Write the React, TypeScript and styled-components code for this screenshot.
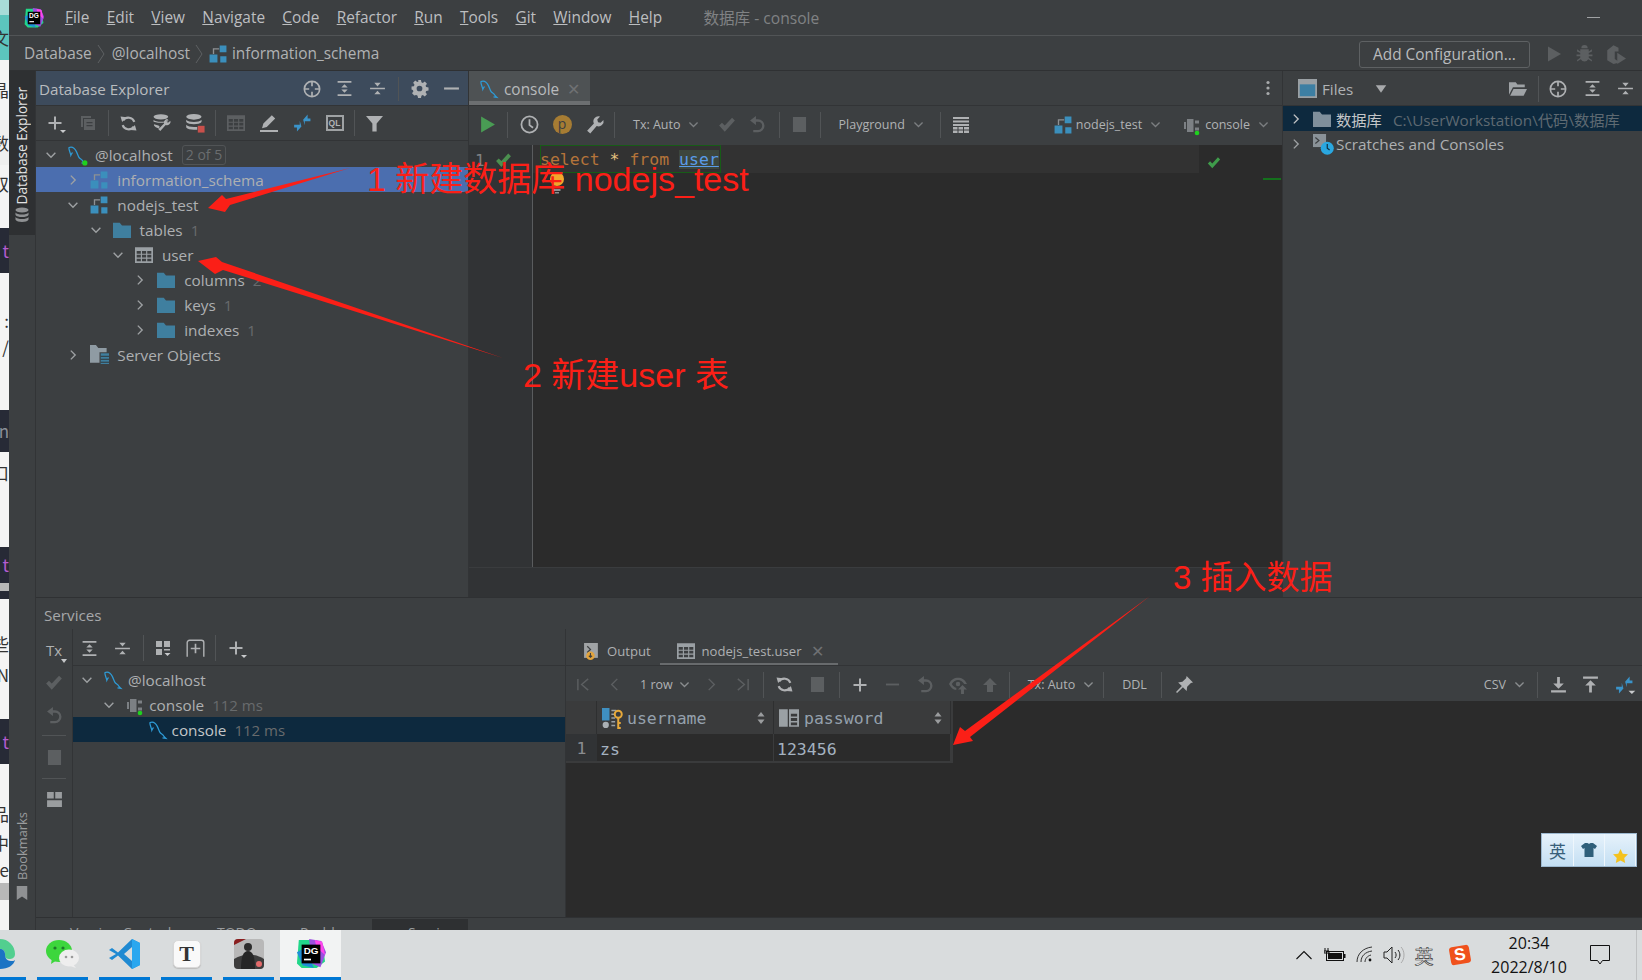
import React from "react";
import styled, { createGlobalStyle } from "styled-components";

const Global = createGlobalStyle`
  html, body { margin: 0; padding: 0; width: 1642px; height: 980px; overflow: hidden; background: #3c3f41; }
  #root { width: 1642px; height: 980px; }
  * { box-sizing: border-box; }
`;

const UI = `"Open Sans", "Noto Sans CJK SC", sans-serif`;
const MONO = `"DejaVu Sans Mono", "Liberation Mono", monospace`;

const Page = styled.div`
  position: relative; width: 1642px; height: 980px; display: flex; flex-direction: column;
  font-family: ${UI}; font-size: 15px; color: #b4b6b8; overflow: hidden;
`;
const Frame = styled.div`display: flex; height: 930px;`;
const Backdrop = styled.div`width: 9px; flex: none; display: flex; flex-direction: column; background: #f4f4f4; overflow: hidden;`;
const Band = styled.div<{ $h: number; $bg: string; $fg?: string }>`
  height: ${p => p.$h}px; background: ${p => p.$bg}; color: ${p => p.$fg || "#333"}; font-size: 17px; line-height: ${p => p.$h}px;
  font-family: "Noto Sans CJK SC", sans-serif; white-space: nowrap; overflow: hidden; flex: none; display: flex; justify-content: flex-end;
`;
const Ide = styled.div`flex: 1; display: flex; flex-direction: column; min-width: 0; background: #3c3f41;`;
const TitleBar = styled.div`height: 36px; flex: none; display: flex; align-items: center; padding-left: 15px; border-bottom: 1px solid #515456;`;
const LogoSlot = styled.div`width: 20px; height: 20px; margin-right: 21px;`;
const Menu = styled.span`margin-right: 17.3px; color: #bcbec0; font-size: 15.4px;`;
const WinTitle = styled.span`margin-left: 24px; color: #808284; font-size: 15.6px;`;
const Minimize = styled.div`margin-left: auto; margin-right: 42px; width: 13px; height: 1px; background: #a0a2a4;`;
const NavBar = styled.div`height: 35px; flex: none; display: flex; align-items: center; padding: 1px 0 0 15px; border-bottom: 1px solid #2f3133; font-size: 15.4px;`;
const Crumb = styled.span`display: flex; align-items: center; gap: 5px; color: #b0b2b4;`;
const CrumbSep = styled.svg<{ $mr: number }>`width: 8px; height: 24px; margin: 0 ${p => p.$mr}px 0 5px;`;
const AddConfig = styled.div`
  margin: 2px 0 0 auto; width: 171px; height: 27px; border: 1px solid #5e6163; border-radius: 3px; display: flex; align-items: center; justify-content: center;
  color: #b9bbbd; font-size: 15.4px;
`;
const NavIcons = styled.div`display: flex; align-items: center; margin: 0 11px 0 8px;`;
const Body = styled.div`flex: 1; display: flex; min-height: 0;`;
const ToolStrip = styled.div`width: 27px; flex: none; display: flex; flex-direction: column; border-right: 1px solid #323436;`;
const StripActive = styled.div`height: 164px; background: #2e3032; display: flex; flex-direction: column; align-items: center; padding-top: 16px; gap: 3px;`;
const StripBottom = styled.div`margin-top: auto; display: flex; flex-direction: column; align-items: center; padding-bottom: 30px; gap: 6px;`;
const VerticalText = styled.div<{ $active?: boolean }>`
  writing-mode: vertical-rl; transform: rotate(180deg); font-size: ${p => (p.$active ? 13.7 : 12.9)}px; line-height: 16px; color: ${p => (p.$active ? "#e3e3e3" : "#9a9c9e")};
`;
const Workspace = styled.div`flex: 1; display: flex; flex-direction: column; min-width: 0;`;
const Upper = styled.div`height: 527px; flex: none; display: flex; border-bottom: 1px solid #2f3133;`;
const DbPanel = styled.div`width: 433px; flex: none; display: flex; flex-direction: column; border-right: 1px solid #323436;`;
const DbHeader = styled.div`
  height: 35px; flex: none; display: flex; align-items: center; background: #3d4b5c; padding: 1px 0 0 3px; border-bottom: 1px solid #323436; font-size: 15.2px; color: #b9bcbf;
`;
const HeaderIcons = styled.div`margin-left: auto; display: flex; align-items: center;`;
const Btn = styled.div<{ $w?: number; $h?: number }>`width: ${p => p.$w || 33}px; height: ${p => p.$h || 26}px; flex: none; display: flex; align-items: center; justify-content: center;`;
const Gap = styled.div<{ $w: number }>`width: ${p => p.$w}px; flex: none;`;
const Sep = styled.div<{ $m?: number; $h?: number }>`width: 1px; height: ${p => p.$h || 26}px; background: #515456; flex: none; margin: 0 ${p => p.$m ?? 3.5}px;`;
const DbToolbar = styled.div`height: 35px; flex: none; display: flex; align-items: center; padding-left: 2px; border-bottom: 1px solid #323436;`;
const Tree = styled.div<{ $top?: number }>`display: flex; flex-direction: column; padding-top: ${p => p.$top ?? 1}px;`;
const Row = styled.div<{ $level: number; $bg?: string; $base?: number }>`
  height: 25px; flex: none; display: flex; align-items: center; padding-left: ${p => (p.$base ?? 7) + p.$level * 22.3}px; background: ${p => p.$bg || "transparent"}; white-space: nowrap;
  font-size: 15.3px; color: #aeb0b2;
`;
const ChevSlot = styled.div`width: 16px; height: 16px; margin-right: 8px; flex: none; display: flex; align-items: center; justify-content: center;`;
const IconSlot = styled.div<{ $mr?: number }>`width: 20px; height: 20px; margin-right: ${p => p.$mr ?? 8}px; flex: none; display: flex; align-items: center; justify-content: center;`;
const Count = styled.span`color: #686b6d; margin-left: 8px; font-size: 15px;`;
const Badge = styled.span`border: 1px solid #515456; border-radius: 3px; color: #6a6d6f; font-size: 14px; height: 20px; line-height: 18px; padding: 0 3px; margin-left: 9px;`;
const EditorPane = styled.div`width: 814px; flex: none; display: flex; flex-direction: column; border-right: 1px solid #323436;`;
const TabStrip = styled.div`height: 35px; flex: none; display: flex; align-items: stretch; border-bottom: 1px solid #323436;`;
const EdTab = styled.div`
  width: 121px; background: #4e5254; border-bottom: 4px solid #6c6f71; display: flex; align-items: center; padding: 6px 0 0 11px; gap: 6px; color: #b8babc; font-size: 15.4px;
`;
const Kebab = styled.div`margin-left: auto; width: 29px; display: flex; align-items: center; justify-content: center;`;
const EdToolbar = styled.div`height: 39px; flex: none; display: flex; align-items: center; padding: 0 0 2px 1px; color: #b0b2b4;`;
const Label = styled.span<{ $ml?: number; $mr?: number; $c?: string; $fs?: number }>`
  margin-left: ${p => p.$ml ?? 0}px; margin-right: ${p => p.$mr ?? 0}px; color: ${p => p.$c || "#b0b2b4"}; font-size: ${p => p.$fs || 12.5}px; white-space: nowrap;
`;
const PushRight = styled.div`margin-left: auto; display: flex; align-items: center;`;
const EditorBody = styled.div`position: relative; flex: 1; display: flex; background: #2b2b2b; min-height: 0;`;
const Gutter = styled.div`
  width: 64px; flex: none; background: #313335; border-right: 1px solid #5a5c5e; padding: 2px 0 0 6px; height: 100%;
  font-family: ${MONO}; font-size: 16px; color: #7f8183; line-height: 27px;
`;
const GutterLine = styled.div`display: flex; gap: 10px; align-items: center; height: 27px;`;
const CodeColumn = styled.div`flex: 1; display: flex; flex-direction: column;`;
const CurrentLine = styled.div`height: 28px; margin-right: 83px; background: #323232; padding-left: 7px; display: flex;`;
const Statement = styled.div`
  width: 181px; height: 28px; border: 1px solid #175c17; font-family: ${MONO}; font-size: 16.5px; line-height: 28px; letter-spacing: 0; white-space: pre; background: #323232;
  text-indent: -1px;
`;
const Kw = styled.span`color: #b5743a;`;
const Star = styled.span`color: #e6c27f;`;
const TableRef = styled.span`color: #5a9be8; text-decoration: underline; background: #3d463d;`;
const Bulb = styled.div`position: absolute; left: 80px; top: 27px;`;
const OkMark = styled.div`position: absolute; right: 61px; top: 11px;`;
const StripeMark = styled.div`position: absolute; right: 1px; top: 33px; width: 18px; height: 2px; background: #14701c;`;
const ProblemsStrip = styled.div`height: 30px; flex: none; background: #313335; border-top: 1px solid #3a3c3e;`;
const FilesPane = styled.div`flex: 1; display: flex; flex-direction: column; min-width: 0;`;
const FilesHeader = styled.div`height: 35px; flex: none; display: flex; align-items: center; padding: 1px 0 0 15px; border-bottom: 1px solid #323436; color: #b0b2b4; font-size: 15.2px; gap: 5px;`;
const Muted = styled.span`color: #5f6a72; margin-left: 11px; font-size: 15.3px;`;
const Services = styled.div`flex: 1; display: flex; flex-direction: column; min-height: 0;`;
const ServicesTitle = styled.div`height: 31px; flex: none; padding: 7px 0 0 8px; font-size: 15.2px; color: #a6a8aa;`;
const ServicesBody = styled.div`flex: 1; display: flex; min-height: 0;`;
const ServiceLeft = styled.div`width: 530px; flex: none; display: flex; border-right: 1px solid #323436;`;
const SideBar = styled.div`width: 37px; flex: none; display: flex; flex-direction: column; align-items: center; border-right: 1px solid #323436; padding-top: 4px;`;
const SideSep = styled.div`width: 24px; height: 1px; background: #515456; margin: 3px 0;`;
const TxLabel = styled.div`position: relative; font-size: 15px; width: 26px; height: 26px; line-height: 26px; text-align: center; color: #afb1b3;`;
const TinyDrop = styled.i`position: absolute; right: 0; bottom: 0; width: 0; height: 0; border: 3px solid transparent; border-top: 4px solid #c4c6c8; border-bottom: 0;`;
const ServiceMain = styled.div`flex: 1; display: flex; flex-direction: column; min-width: 0;`;
const SvcToolbar = styled.div`height: 37px; flex: none; display: flex; align-items: center; border-bottom: 1px solid #323436; padding: 2px 0 0 0;`;
const ResultPane = styled.div`flex: 1; display: flex; flex-direction: column; min-width: 0; margin-top: 0;`;
const ResTabs = styled.div`height: 37px; flex: none; padding: 10px 0 0 17px; display: flex; align-items: stretch; border-bottom: 1px solid #323436; font-size: 13.1px;`;
const ResTab = styled.div<{ $active?: boolean }>`
  display: flex; align-items: center; gap: 7px; padding: 0 ${p => (p.$active ? 14 : 9)}px 0 ${p => (p.$active ? 17 : 0)}px; color: #aeb0b2; height: 26px;
  border-bottom: 2px solid ${p => (p.$active ? "#686b6d" : "transparent")};
`;
const Close = styled.span`color: #6f7173; font-size: 16px; margin-left: 2px; line-height: 1;`;
const ResToolbar = styled.div`height: 35px; flex: none; display: flex; align-items: center; padding: 2px 0 0 2px;`;
const GridArea = styled.div`flex: 1; background: #2b2b2b; min-height: 0;`;
const GridWrap = styled.div`width: 387px; display: grid; grid-template-columns: 31px 177px 177px; grid-auto-rows: auto; font-family: ${MONO}; font-size: 16.5px; border-right: 2px solid #3a3b3c; border-bottom: 2px solid #3a3b3c;`;
const HeadCell = styled.div`height: 33px; background: #3a3b3c; border-right: 1px solid #2e2f30; display: flex; align-items: center; padding: 1px 8px 0 5px; gap: 5px; color: #95a1ad;`;
const NumCell = styled.div`height: 27px; background: #313335; display: flex; align-items: center; justify-content: center; padding-top: 2px; color: #8a8d90;`;
const Cell = styled.div`height: 27px; border-right: 1px solid #3a3b3c; display: flex; align-items: center; padding: 3px 0 0 3px; color: #a4b2c0; background: #2b2b2b;`;
const Sorter = styled.svg`width: 8px; height: 14px; margin-left: auto; flex: none;`;
const ColName = styled.span`letter-spacing: 0;`;
const StatusBar = styled.div`height: 13px; flex: none; border-top: 1px solid #2f3133; display: flex; padding-left: 14px; overflow: hidden; font-size: 14px; color: #9a9c9e;`;
const StatusItem = styled.div<{ $w: number; $pad: number; $active?: boolean }>`
  width: ${p => p.$w}px; padding: 5px 0 0 ${p => p.$pad}px; background: ${p => (p.$active ? "#2e3032" : "transparent")}; line-height: 18px; white-space: nowrap; margin-top: 1px;
`;
const Taskbar = styled.div`height: 50px; flex: none; background: #d9dcdd; display: flex; align-items: stretch;`;
const TaskBtn = styled.div<{ $w: number; $ml: number; $active?: boolean; $align?: string }>`
  width: ${p => p.$w}px; margin-left: ${p => p.$ml}px; flex: none; border-bottom: 3px solid #0078d4; display: flex; align-items: center; justify-content: ${p => p.$align || "center"};
  background: ${p => (p.$active ? "#f2f3f3" : "transparent")}; overflow: hidden;
`;
const TypTile = styled.div`
  width: 28px; height: 28px; border-radius: 5px; background: #f9f9f9; border: 1px solid #d8d8d8; box-shadow: 0 1px 1px #bbb; display: flex; align-items: center; justify-content: center;
  font-family: "Liberation Serif", serif; font-weight: 700; font-size: 22px; color: #333;
`;
const Tray = styled.div`margin-left: auto; display: flex; align-items: center; color: #111;`;
const TraySlot = styled.div<{ $w: number }>`width: ${p => p.$w}px; flex: none; display: flex; align-items: center; justify-content: center;`;
const ImeChar = styled.span`font-family: "Noto Sans CJK SC", sans-serif; font-size: 19px; color: #e9e9e9; -webkit-text-stroke: 0.6px #333; line-height: 1;`;
const Clock = styled.div`width: 92px; flex: none; display: flex; flex-direction: column; align-items: center; font-size: 16px; line-height: 24px; color: #111; font-family: "Open Sans", sans-serif;`;
const NoticeEdge = styled.div`width: 1px; height: 50px; background: #bfc1c2; margin: 0 5px 0 11px;`;
const Annotation = styled.div<{ $x: number; $y: number; $fs?: number }>`
  position: absolute; left: ${p => p.$x}px; top: ${p => p.$y}px; color: #fb1f17; font-size: ${p => p.$fs || 34}px; line-height: 44px; white-space: nowrap;
  font-family: "Liberation Sans", "Noto Sans CJK SC", sans-serif; font-weight: 400;
`;
const ArrowLayer = styled.svg`position: absolute; left: 0; top: 0; width: 1642px; height: 980px; pointer-events: none;`;
const Sogou = styled.div`
  position: absolute; left: 1541px; top: 833px; width: 96px; height: 34px; display: flex; border: 1px solid #9db9d0;
  background: linear-gradient(180deg, #e6f2fb, #c4dff3);
`;
const SogouCell = styled.div<{ $w: number; $star?: boolean }>`
  width: ${p => p.$w}px; flex: none; display: flex; align-items: ${p => (p.$star ? "flex-end" : "center")}; justify-content: center; padding-bottom: ${p => (p.$star ? 3 : 0)}px;
  border-right: 1px solid #eef6fc; font-family: "Noto Sans CJK SC", sans-serif; font-size: 17px; color: #39607a;
`;

const Glyph = styled.svg.attrs({ viewBox: "0 0 16 16" })<{ $s?: number; $c?: string }>`
  width: ${p => p.$s || 16}px; height: ${p => p.$s || 16}px; color: ${p => p.$c || "#afb1b3"}; flex: none; display: block; overflow: visible;
`;
type IP = { s?: number; c?: string };
const DIM = "#5c5f61";

const ChevD = ({ c = "#9ea1a3", s = 14 }: IP) => <Glyph $s={s} $c={c}><path d="M3 5.5l5 5 5-5" fill="none" stroke="currentColor" strokeWidth="1.6" /></Glyph>;
const ChevR = ({ c = "#9ea1a3", s = 14 }: IP) => <Glyph $s={s} $c={c}><path d="M5.5 3l5 5-5 5" fill="none" stroke="currentColor" strokeWidth="1.6" /></Glyph>;
const Target = ({ s = 18, c }: IP) => (
  <Glyph $s={s} $c={c}><g fill="none" stroke="currentColor" strokeWidth="1.5"><circle cx="8" cy="8" r="6.8" /><path d="M8 1.5v4M8 10.5v4M1.5 8h4M10.5 8h4" /></g></Glyph>
);
const ExpandAll = ({ s = 17, c }: IP) => (
  <Glyph $s={s} $c={c}><path d="M1.5 1h13v1.6h-13zM1.5 13.4h13V15h-13zM8 4l3 3H5zM8 12l-3-3h6z" fill="currentColor" /></Glyph>
);
const CollapseAll = ({ s = 17, c }: IP) => (
  <Glyph $s={s} $c={c}><path d="M1 7.2h14v1.6H1zM8 6L5 2.5h6zM8 10l3 3.5H5z" fill="currentColor" /></Glyph>
);
const Gear = ({ s = 17, c }: IP) => (
  <Glyph $s={s} $c={c}><path fillRule="evenodd" fill="currentColor" d="M6.6 0h2.8l.4 2.2 1.3.6L13 1.5l2 2-1.3 1.9.6 1.3 2.2.4v2.8l-2.2.4-.6 1.3 1.3 1.9-2 2-1.9-1.3-1.3.6-.4 2.2H6.6l-.4-2.2-1.3-.6L3 14.5l-2-2 1.3-1.9-.6-1.3L.5 9V6.2l2.2-.4.6-1.3L2 2.5l2-2 1.9 1.3 1.3-.6zM8 5.3a2.7 2.7 0 100 5.4 2.7 2.7 0 000-5.4z" /></Glyph>
);
const Dash = ({ s = 17, c }: IP) => <Glyph $s={s} $c={c}><path d="M1 7h14v2H1z" fill="currentColor" /></Glyph>;
const PlusDrop = ({ s = 16, c }: IP) => (
  <Glyph $s={s} $c={c}><path d="M7 1.5h2V7h5.5v2H9v5.500H7V9H1.500V7H7z" fill="currentColor" /><path d="M13 15h6l-3 3z" fill="#c8cacc" /></Glyph>
);
const Plus = ({ s = 16, c }: IP) => <Glyph $s={s} $c={c}><path d="M7 1.500h2V7h5.500v2H9v5.500H7V9H1.500V7H7z" fill="currentColor" /></Glyph>;
const CopyDoc = ({ s = 16, c = DIM }: IP) => (
  <Glyph $s={s} $c={c}><path d="M1 1h10v2H3v9H1z" fill="currentColor" /><path fillRule="evenodd" d="M4 4h11v11H4zM6.500 7v1.300h6V7zm0 3v1.300h6V10z" fill="currentColor" /></Glyph>
);
const Refresh = ({ s = 17, c }: IP) => (
  <Glyph $s={s} $c={c}><g fill="none" stroke="currentColor" strokeWidth="2"><path d="M13.500 6.500A6 6 0 003 5" /><path d="M2.500 9.500A6 6 0 0013 11" /></g><path d="M0.500 1.500l5.500.5-4 4.500zM15.500 14.500L10 14l4-4.500z" fill="currentColor" /></Glyph>
);
const DbStack = ({ s = 16, c }: IP) => (
  <Glyph $s={s} $c={c}><g fill="currentColor"><ellipse cx="8" cy="3" rx="6.500" ry="2.500" /><path d="M1.500 5.500c1 1.500 3.500 2 6.500 2s5.500-.5 6.500-2v2.500c-1 1.500-3.500 2-6.500 2s-5.500-.5-6.500-2z" /><path d="M1.500 10c1 1.500 3.500 2 6.500 2s5.500-.5 6.500-2v2.800c-1 1.500-3.500 2.200-6.500 2.200s-5.500-.7-6.500-2.200z" /></g></Glyph>
);
const DbWrench = ({ s = 18, c }: IP) => (
  <Glyph $s={s} $c={c}><g fill="currentColor"><ellipse cx="7" cy="2.500" rx="6.500" ry="2.300" /><path d="M.5 5c1 1.300 3.500 1.800 6.500 1.800S12.500 6.300 13.500 5v1.500L9 7.800H4.500L.5 6.800zM.8 9l4 1.200 1 .6L5.500 13 2.500 11.800 1 10.500z" /><path d="M15.500 6a3.200 3.200 0 01-4.200 3.800L6.500 15.200 4.800 13.500l5-5A3.200 3.200 0 0113.500 4.500L11.800 6.500l1.500 1.300z" /></g></Glyph>
);
const DbRed = ({ s = 18, c }: IP) => (
  <Glyph $s={s} $c={c}><g fill="currentColor"><ellipse cx="7" cy="2.500" rx="6.800" ry="2.500" /><path d="M.2 5c1 1.400 3.800 2 6.800 2s5.800-.6 6.800-2v2.200c-1 1.400-3.800 2-6.800 2S1.200 8.600.2 7.200z" /><path d="M.2 9.500c1 1.400 3.800 2 6.800 2h3v2.500H7c-3 0-5.800-.7-6.800-2z" /></g><path d="M10.500 10.500H16.500V16.500H10.500z" fill="#c9504b" /></Glyph>
);
const TableGrid = ({ s = 18, c = "#9aa0a4" }: IP) => (
  <Glyph $s={s} $c={c}><path fillRule="evenodd" fill="currentColor" d="M0 1h16v14H0zM1.500 4.500v2.300h3.700V4.500zm4.700 0v2.300h3.700V4.500zm4.700 0v2.300h3.600V4.500zM1.500 7.800v2.500h3.700V7.800zm4.700 0v2.500h3.700V7.800zm4.700 0v2.500h3.600V7.800zM1.500 11.300v2.200h3.700v-2.200zm4.700 0v2.200h3.700v-2.200zm4.700 0v2.200h3.600v-2.200z" /></Glyph>
);
const Pencil = ({ s = 18, c }: IP) => (
  <Glyph $s={s} $c={c}><path d="M10.500 1l3 3-7.500 7.500-4.200 1.200 1.200-4.200zM0 14.300h16V16H0z" fill="currentColor" /></Glyph>
);
const BlueArrows = ({ s = 18, drop }: IP & { drop?: boolean }) => (
  <Glyph $s={s} $c="#3a93c9">
    <path d="M1 9.500h5V6l1.500 5-4 4.500V12H1zM15.500 6.500h-5V10L9 5l4-4.500V4h2.500z" fill="currentColor" />
    {drop && <path d="M12 13h6l-3 3z" fill="#c8cacc" />}
  </Glyph>
);
const QlBox = styled.div`
  width: 18px; height: 16px; border: 2px solid #9fa2a4; font-family: "Liberation Sans", sans-serif; font-weight: 700; font-size: 8.5px; line-height: 12px; text-align: center; color: #b0b2b4; letter-spacing: 0;
`;
const Funnel = ({ s = 17, c }: IP) => <Glyph $s={s} $c={c}><path d="M0 1h16l-6 7v7.500H6V8z" fill="currentColor" /></Glyph>;
const Play = ({ s = 17, c = "#499c54" }: IP) => <Glyph $s={s} $c={c}><path d="M2 .5l13 7.500L2 15.500z" fill="currentColor" /></Glyph>;
const ClockI = ({ s = 19, c }: IP) => <Glyph $s={s} $c={c}><circle cx="8" cy="8" r="6.800" fill="none" stroke="currentColor" strokeWidth="1.500" /><path d="M8 3.500V8.500l3 2.300" fill="none" stroke="currentColor" strokeWidth="1.500" /></Glyph>;
const PBadge = styled.div`width: 19px; height: 19px; border-radius: 50%; background: #a67c33; color: #3c3f41; font-size: 14px; line-height: 17px; text-align: center;`;
const Wrench = ({ s = 18, c }: IP) => <Glyph $s={s} $c={c}><path d="M15.500 3.500a4.500 4.500 0 01-6 5.400L3.800 15.500 1 13l6-6.300A4.500 4.500 0 0112.500.5L10 3.200l.7 2.300 2.300.600z" fill="currentColor" /></Glyph>;
const CheckI = ({ s = 18, c = DIM }: IP) => <Glyph $s={s} $c={c}><path d="M1 8.500l2.500-2.500L6 8.500 12.500 1.500 15 4l-9 10z" fill="currentColor" /></Glyph>;
const Undo = ({ s = 17, c = DIM }: IP) => <Glyph $s={s} $c={c}><path d="M5 4.200h3.500a5 5 0 110 10H4" fill="none" stroke="currentColor" strokeWidth="2.200" /><path d="M6.500 0v8.500L1 4.200z" fill="currentColor" /></Glyph>;
const Stop = ({ s = 15, c = DIM }: IP) => <Glyph $s={s} $c={c}><path d="M1 0h14v16H1z" fill="currentColor" /></Glyph>;
const RowsIcon = ({ s = 16, c }: IP) => (
  <Glyph $s={s} $c={c}><path fill="currentColor" d="M0 0h16v2H0zM0 3.500h16v2H0zM0 7h16v2H0zM0 10h4.500v2.500H0zM5.500 10h4.500v2.500H5.500zM11 10h5v2.500h-5zM0 13.500h4.500V16H0zM5.500 13.500h4.500V16H5.500zM11 13.500h5V16h-5z" /></Glyph>
);
const Schema = ({ s = 18, c = "#3b8fbc" }: IP) => (
  <Glyph $s={s} $c={c}>
    <path d="M4 8V3.500h5" fill="none" stroke="#8d9194" strokeWidth="1.200" />
    <path d="M9.500 0.500h6v6h-6zM0.500 8.500h7v7h-7zM10 10h5.500v5.500H10z" fill="currentColor" />
  </Glyph>
);
const Folder = ({ s = 18, c = "#3f7f9f" }: IP) => <Glyph $s={s} $c={c}><path d="M0 1.500h6L8 4h8v11H0z" fill="currentColor" /></Glyph>;
const ServerObj = ({ s = 19 }: IP) => (
  <Glyph $s={s} $c="#8f9ba3">
    <path d="M0 0h5l2 2.500h7V6H8v9H0z" fill="currentColor" />
    <path d="M9 7h7v9H9z" fill="#3f7f9f" />
    <path d="M9 9.500h7M9 12h7M9 14.500h7" stroke="#2f3436" strokeWidth="0.800" />
  </Glyph>
);
const Dolphin = ({ s = 18, dot }: IP & { dot?: boolean }) => (
  <Glyph $s={s} $c="#2e9bd6">
    <path d="M.5 1.500c3-1.500 5.500.5 7 3.500 1 2 1.500 4 2.500 5.500 1 1 2.500 1.500 3.500 3.500M.8 1.500C.8 4 2 5.500 2.500 8.200c.5-1.200.9-2 1.500-2.500M13.500 14l1.500 1.500-3-.5" fill="none" stroke="currentColor" strokeWidth="1.100" />
    {dot && <circle cx="15" cy="15" r="2.300" fill="#1fd11f" />}
  </Glyph>
);
const Plug = ({ s = 18 }: IP) => (
  <Glyph $s={s} $c="#7c8084">
    <path d="M0 5h2v7H0zM3 2h6.500v13H3zM11 3.500h4v3h-4zM11 10.500h4v3h-4z" fill="currentColor" />
    <circle cx="13" cy="16" r="2.300" fill="#1fd11f" />
  </Glyph>
);
const Scratches = ({ s = 19 }: IP) => (
  <Glyph $s={s} $c="#8a9298">
    <path d="M0 0h11v11H0z" fill="currentColor" />
    <path d="M2 3l3 2.500L2 8" fill="none" stroke="#3c3f41" strokeWidth="1" />
    <circle cx="12" cy="12" r="5.500" fill="#2aa7e0" />
    <path d="M12 8.500V12l2 1.500" fill="none" stroke="#103040" strokeWidth="1" />
  </Glyph>
);
const FilesIcon = ({ s = 19 }: IP) => (
  <Glyph $s={s} $c="#9aa0a4"><path d="M0 0h16v16H0z" fill="currentColor" /><path d="M1.500 4.500h13V14.500h-13z" fill="#3d7fa3" /></Glyph>
);
const OpenFolder = ({ s = 18, c = "#9fa3a6" }: IP) => <Glyph $s={s} $c={c}><path d="M0 2h6l1.500 2H14v2.500H3.500L0 13zM4 8h12l-3 6H1z" fill="currentColor" /></Glyph>;
const Kebabs = () => <Glyph $s={16} $c="#a8aaac"><circle cx="8" cy="2.500" r="1.600" fill="currentColor" /><circle cx="8" cy="8" r="1.600" fill="currentColor" /><circle cx="8" cy="13.500" r="1.600" fill="currentColor" /></Glyph>;
const Triangle = () => <Glyph $s={12} $c="#a8aaac"><path d="M1 3h14l-7 10z" fill="currentColor" /></Glyph>;
const Bug = ({ s = 17, c = DIM }: IP) => (
  <Glyph $s={s} $c={c}><path d="M4 4h8v2l3-2v2l-3 1.500V9h3.500v1.500H12V12l3 2v1.500l-3.500-2A4 4 0 014.500 13.500L1 15.500V14l3-2v-1.500H.5V9H4V7.500L1 6V4l3 2zM5 3a3 3 0 016 0z" fill="currentColor" /></Glyph>
);
const Coverage = ({ s = 20, c = DIM }: IP) => (
  <Glyph $s={s} $c={c}><path d="M1 5l5-4 4 2v3H7v6l3 2v1l-4 1-5-3z" fill="currentColor" /><path d="M9 7l7 4.500L9 16z" fill="currentColor" /></Glyph>
);
const GroupI = ({ s = 16, c }: IP) => (
  <Glyph $s={s} $c={c}><path d="M1 1h6v6H1zM9 1h6v6H9zM1 9h6v6H1zM9 9h6v1.500H9z" fill="currentColor" /><path d="M9.500 13h6l-3 3z" fill="#c8cacc" /></Glyph>
);
const NewGroup = ({ s = 19, c }: IP) => (
  <Glyph $s={s} $c={c}><path d="M1 15V3a2 2 0 012-2h10a2 2 0 012 2v12" fill="none" stroke="currentColor" strokeWidth="1.200" /><path d="M8 4v8M4 8h8" stroke="currentColor" strokeWidth="1.400" /></Glyph>
);
const LayoutI = ({ s = 17, c = "#9a9d9f" }: IP) => <Glyph $s={s} $c={c}><path d="M1 1h6.300v6H1zM8.700 1H15v6H8.700zM1 8.700h14V15H1z" fill="currentColor" /></Glyph>;
const First = ({ c = DIM }: IP) => <Glyph $s={15} $c={c}><path d="M2 2v12M13 2L6 8l7 6" fill="none" stroke="currentColor" strokeWidth="1.500" /></Glyph>;
const Last = ({ c = DIM }: IP) => <Glyph $s={15} $c={c}><path d="M14 2v12M3 2l7 6-7 6" fill="none" stroke="currentColor" strokeWidth="1.500" /></Glyph>;
const Prev = ({ c = DIM }: IP) => <Glyph $s={15} $c={c}><path d="M11 2L5 8l6 6" fill="none" stroke="currentColor" strokeWidth="1.500" /></Glyph>;
const Next = ({ c = DIM }: IP) => <Glyph $s={15} $c={c}><path d="M5 2l6 6-6 6" fill="none" stroke="currentColor" strokeWidth="1.500" /></Glyph>;
const Minus = ({ c = DIM }: IP) => <Glyph $s={15} $c={c}><path d="M1 7h14v2H1z" fill="currentColor" /></Glyph>;
const EyeUp = ({ c = DIM }: IP) => (
  <Glyph $s={18} $c={c}><path d="M0 7c2-4 4.500-5.500 8-5.500S14 3 16 7h-2.500C12 4.500 10 3.500 8 3.500S4 4.500 2.500 7C3.500 9 5 10 6.500 10.500V12.500C3.500 12 1.500 10 0 7z" fill="currentColor" /><circle cx="8" cy="7" r="2" fill="currentColor" /><path d="M12 8l4 4h-2.700v4h-2.600v-4H8z" fill="currentColor" /></Glyph>
);
const Up = ({ c = DIM }: IP) => <Glyph $s={16} $c={c}><path d="M8 1l7 7h-4v7H5V8H1z" fill="currentColor" /></Glyph>;
const PinI = ({ c }: IP) => <Glyph $s={17} $c={c}><path d="M10 0l6 6-2 .5L10.500 10 10 14 6.500 10.500 1 16l-1-1 5.500-5.500L2 6l4-.5L9.500 2z" fill="currentColor" /></Glyph>;
const Download = ({ c }: IP) => <Glyph $s={17} $c={c}><path d="M6.700 1h2.600v6H13L8 12 3 7h3.700zM1 13.500h14V15.500H1z" fill="currentColor" /></Glyph>;
const Upload = ({ c }: IP) => <Glyph $s={17} $c={c}><path d="M1 .5h14v2H1zM8 4l5 5H9.300v6.500H6.700V9H3z" fill="currentColor" /></Glyph>;
const OutputI = () => (
  <Glyph $s={17} $c="#a0a3a5"><path d="M1 0h13v14H1z" fill="currentColor" /><path d="M4 3l3 3-3 3" fill="none" stroke="#3c3f41" strokeWidth="1.200" /><circle cx="7" cy="12" r="4" fill="#e2a33c" /><path d="M7 9.500v4M5.500 12l1.500 1.500L8.500 12" fill="none" stroke="#3c3f41" strokeWidth="1" /></Glyph>
);
const KeyCol = () => (
  <Glyph $s={20} $c="#3f8fc0">
    <path d="M0 0h6v10H0z" fill="currentColor" /><circle cx="3" cy="13.500" r="2.500" fill="#aab0b4" />
    <path d="M7.500 2h4M7.500 5h3M7.500 8h3M7.500 11h3M7.500 14h3" stroke="#9aa0a4" strokeWidth="1.200" />
    <circle cx="13" cy="5" r="2.800" fill="none" stroke="#e8a93a" strokeWidth="1.600" /><path d="M13 8v8h2M13 12h2" fill="none" stroke="#e8a93a" strokeWidth="1.600" />
  </Glyph>
);
const ColIcon = () => (
  <Glyph $s={20} $c="#9aa0a4"><path d="M0 1h7v14H0z" fill="currentColor" /><path fillRule="evenodd" d="M8 1h8v14H8zM9.500 4.500v2.300h5V4.500zm0 3.500v2.300h5V8zm0 3.500v2.300h5v-2.300z" fill="currentColor" /></Glyph>
);
const SortArrows = () => <Sorter viewBox="0 0 8 14"><path d="M4 1l3.500 4.500h-7zM4 13L.5 8.500h7z" fill="#9a9c9e" /></Sorter>;
const LightBulb = () => (
  <svg width="16" height="22" viewBox="0 0 16 22"><circle cx="8" cy="7" r="7" fill="#f2a82c" /><path d="M4 14h8v2H4zM4.500 17h7v2h-7zM6 20h4v1.500H6z" fill="#8d8f91" /></svg>
);
const DgLogo = ({ size = 20 }: { size?: number }) => (
  <svg width={size} height={size} viewBox="0 0 32 32" style={{ display: "block" }}>
    <path d="M3 1h17l8 3 3 20-9 7H6l-5-5z" fill="#21d789" />
    <path d="M14 0l13 2 5 12-6 16-9-4z" fill="#9c4fe0" />
    <path d="M20 1l8 2 3 14-9-8z" fill="#ff45ed" />
    <path d="M1 14l6 14 12 3-9-22z" fill="#1f8ed9" />
    <rect x="6" y="6" width="20" height="20" fill="#000" />
    <text x="16" y="16.500" textAnchor="middle" fontFamily="Liberation Sans, sans-serif" fontWeight="700" fontSize="10.500" fill="#fff">DG</text>
    <rect x="8.500" y="21" width="7.500" height="1.800" fill="#fff" />
  </svg>
);
const Edge = () => (
  <svg width="16" height="32" viewBox="0 0 16 32" style={{ display: "block" }}>
    <path d="M0 1a15 15 0 0115 15c0 4-3 5-6 5-4 0-4-3-4-5 0-3-2-5-5-5z" fill="#52cf8f" />
    <path d="M0 11c3 0 5 2 5 5s1 7 6 7c2 0 3 0 4-1-1 5-7 9-15 9z" fill="#1b74c4" />
  </svg>
);
const WeChat = () => (
  <svg width="33" height="30" viewBox="0 0 33 30" style={{ display: "block" }}>
    <ellipse cx="13" cy="12" rx="13" ry="11" fill="#3dd63d" />
    <path d="M6 19l-1 6 6-4z" fill="#3dd63d" />
    <circle cx="9" cy="9" r="1.600" fill="#1e7a2b" /><circle cx="17" cy="9" r="1.600" fill="#1e7a2b" />
    <ellipse cx="23" cy="19" rx="10" ry="8.500" fill="#eeeeee" />
    <path d="M27 25l3 4-6-2z" fill="#eeeeee" />
    <circle cx="20" cy="18" r="1.300" fill="#9a9a9a" /><circle cx="26" cy="18" r="1.300" fill="#9a9a9a" />
  </svg>
);
const VsCode = () => (
  <svg width="32" height="32" viewBox="0 0 32 32" style={{ display: "block" }}>
    <path d="M23 1l8 4v22l-8 4L9 17.500 3 22l-3-2 7-4-7-4 3-2 6 4.500z" fill="#1f8ad2" />
    <path d="M23 1l8 4v22l-8 4z" fill="#2aa7ef" />
    <path d="M23 9v14l-8-7z" fill="#d9dcdd" />
  </svg>
);
const GameTile = () => (
  <svg width="30" height="30" viewBox="0 0 30 30" style={{ display: "block" }}>
    <rect width="30" height="30" rx="4" fill="#b8b8b8" />
    <path d="M0 20c10-6 20-6 30 0v6a4 4 0 01-4 4H4a4 4 0 01-4-4z" fill="#3d3d3d" />
    <circle cx="14" cy="8" r="4" fill="#2d2d2d" />
    <path d="M7 30c0-12 2-18 7-18s7 6 7 18z" fill="#262626" />
    <path d="M0 6V4a4 4 0 014-4h8z" fill="#8a1f1f" />
    <circle cx="25" cy="25" r="3" fill="#e36b6b" />
  </svg>
);
const Battery = () => (
  <svg width="22" height="14" viewBox="0 0 22 14" style={{ display: "block" }}>
    <rect x="2.500" y="3.500" width="17" height="9" fill="none" stroke="#111" />
    <rect x="4" y="5" width="14" height="6" fill="#111" />
    <rect x="19.500" y="6" width="2" height="4" fill="#111" />
    <path d="M1 0v3M4 0v3M0 3h5v2H0z" stroke="#111" strokeWidth="1" fill="none" />
  </svg>
);
const Wifi = () => (
  <svg width="18" height="18" viewBox="0 0 18 18" style={{ display: "block" }} fill="none" stroke="#333">
    <path d="M1 16C1 8 7 2 16 1M5 16C5 10 9 6 16 5M9 16C9 13 11 10 15 9" strokeWidth="1" />
    <circle cx="14" cy="14" r="1.400" fill="#111" stroke="none" />
  </svg>
);
const Speaker = () => (
  <svg width="22" height="18" viewBox="0 0 22 18" style={{ display: "block" }} fill="none" stroke="#222">
    <path d="M1 6h3l5-5v16l-5-5H1z" strokeWidth="1" />
    <path d="M12 6c1.500 2 1.500 4 0 6M15 4c2.500 3 2.500 7 0 10" strokeWidth="1" />
    <path d="M18 1c4 4 4 12 0 16" stroke="#aaa" strokeWidth="1" />
  </svg>
);
const SogouTile = styled.div`
  width: 20px; height: 18px; border-radius: 3px; background: #f0511c; color: #fff; font-family: "Liberation Sans", sans-serif; font-weight: 700; font-size: 17px; line-height: 18px; text-align: center; transform: rotate(-10deg);
`;
const Notice = () => (
  <svg width="20" height="20" viewBox="0 0 20 20" style={{ display: "block" }}>
    <path d="M.5.500h19v15h-7L10 19l-2.500-3.500h-7z" fill="none" stroke="#111" />
  </svg>
);
const ChevUp = () => <svg width="16" height="10" viewBox="0 0 16 10" style={{ display: "block" }}><path d="M.5 9L8 1.500 15.500 9" fill="none" stroke="#111" strokeWidth="1.100" /></svg>;
const Shirt = () => <svg width="16" height="14" viewBox="0 0 16 14" style={{ display: "block" }}><path d="M4 0h2.500c.5 1 2.500 1 3 0H12l4 3-2 3-1.500-1v9h-9V5L2 6 0 3z" fill="#2f5f7a" /></svg>;
const StarI = () => <svg width="15" height="14" viewBox="0 0 16 15" style={{ display: "block" }}><path d="M8 0l2.400 5 5.600.7-4 3.900 1 5.400L8 12.400 3 15l1-5.400-4-3.900L5.600 5z" fill="#f4c21f" /></svg>;

const bands: [number, string, string?, string?][] = [
  [15, "#a8dcd8"], [45, "#5cc5bd", "文"], [60, "#f4f4f4", "晶"], [45, "#efefef", "数"], [38, "#f4f4f4", "双"], [25, "#f4f4f4"],
  [45, "#272a36", "t", "#b45cd0"], [38, "#f4f4f4"], [20, "#f4f4f4", ":"], [32, "#f4f4f4", "/"], [47, "#f4f4f4"], [42, "#272a36", "n", "#8a8f98"],
  [42, "#f4f4f4", "口"], [53, "#f4f4f4", ""], [36, "#272a36", "t", "#b45cd0"], [8, "#b8b8b8"], [8, "#272a36"], [30, "#f4f4f4"], [30, "#f4f4f4", "些"], [32, "#f4f4f4", "IN"],
  [28, "#f4f4f4"], [45, "#272a36", "t", "#b45cd0"], [35, "#f4f4f4"], [30, "#f4f4f4", "品"], [28, "#f4f4f4", "中"], [26, "#f4f4f4", "se"], [17, "#b8b8b8"], [10, "#f4f4f4"],
];

const U = ({ c, rest }: { c: string; rest: string }) => <Menu><u>{c}</u>{rest}</Menu>;

export default function App() {
  return (
    <Page>
      <Global />
      <Frame>
        <Backdrop>
          {bands.map(([h, bg, t, fg], i) => <Band key={i} $h={h} $bg={bg} $fg={fg}>{t}</Band>)}
        </Backdrop>
        <Ide>
          <TitleBar>
            <LogoSlot><DgLogo /></LogoSlot>
            <U c="F" rest="ile" /><U c="E" rest="dit" /><U c="V" rest="iew" /><U c="N" rest="avigate" /><U c="C" rest="ode" />
            <U c="R" rest="efactor" /><U c="R" rest="un" /><U c="T" rest="ools" /><U c="G" rest="it" /><U c="W" rest="indow" /><U c="H" rest="elp" />
            <WinTitle>数据库 - console</WinTitle>
            <Minimize />
          </TitleBar>
          <NavBar>
            <Crumb>Database</Crumb>
            <CrumbSep $mr={7} viewBox="0 0 8 24"><path d="M1 3l6 9-6 9" fill="none" stroke="#5e6163" /></CrumbSep>
            <Crumb>@localhost</Crumb>
            <CrumbSep $mr={6} viewBox="0 0 8 24"><path d="M1 3l6 9-6 9" fill="none" stroke="#5e6163" /></CrumbSep>
            <Crumb><Schema />information_schema</Crumb>
            <AddConfig>Add Configuration...</AddConfig>
            <NavIcons>
              <Btn $w={31}><Play c={DIM} s={16} /></Btn>
              <Btn $w={31}><Bug /></Btn>
              <Btn $w={31}><Coverage /></Btn>
            </NavIcons>
          </NavBar>
          <Body>
            <ToolStrip>
              <StripActive>
                <VerticalText $active>Database Explorer</VerticalText>
                <DbStack s={16} c="#8f9193" />
              </StripActive>
              <StripBottom>
                <VerticalText>Bookmarks</VerticalText>
                <Glyph $s={14} $c="#8f9193"><path d="M2 0h12v16l-6-4-6 4z" fill="currentColor" /></Glyph>
              </StripBottom>
            </ToolStrip>
            <Workspace>
              <Upper>
                <DbPanel>
                  <DbHeader>
                    Database Explorer
                    <HeaderIcons>
                      <Btn><Target /></Btn><Btn><ExpandAll /></Btn><Btn><CollapseAll /></Btn>
                      <Sep $h={24} $m={4} />
                      <Btn $w={32}><Gear /></Btn><Btn $w={33}><Dash /></Btn>
                    </HeaderIcons>
                  </DbHeader>
                  <DbToolbar>
                    <Btn><PlusDrop /></Btn><Btn><CopyDoc /></Btn><Sep $m={3.5} />
                    <Btn><Refresh /></Btn><Btn><DbWrench /></Btn><Btn><DbRed /></Btn><Sep $m={3.5} />
                    <Btn><TableGrid c={DIM} /></Btn><Btn><Pencil /></Btn><Btn><BlueArrows /></Btn><Btn><QlBox>QL</QlBox></Btn><Sep $m={3} />
                    <Btn><Funnel /></Btn>
                  </DbToolbar>
                  <Tree>
                    <Row $level={0}><ChevSlot><ChevD /></ChevSlot><IconSlot><Dolphin dot /></IconSlot>@localhost<Badge>2 of 5</Badge></Row>
                    <Row $level={1} $bg="#4b6eaf"><ChevSlot><ChevR /></ChevSlot><IconSlot><Schema /></IconSlot>information_schema</Row>
                    <Row $level={1}><ChevSlot><ChevD /></ChevSlot><IconSlot><Schema /></IconSlot>nodejs_test</Row>
                    <Row $level={2}><ChevSlot><ChevD /></ChevSlot><IconSlot><Folder /></IconSlot>tables<Count>1</Count></Row>
                    <Row $level={3}><ChevSlot><ChevD /></ChevSlot><IconSlot><TableGrid /></IconSlot>user</Row>
                    <Row $level={4}><ChevSlot><ChevR /></ChevSlot><IconSlot><Folder /></IconSlot>columns<Count>2</Count></Row>
                    <Row $level={4}><ChevSlot><ChevR /></ChevSlot><IconSlot><Folder /></IconSlot>keys<Count>1</Count></Row>
                    <Row $level={4}><ChevSlot><ChevR /></ChevSlot><IconSlot><Folder /></IconSlot>indexes<Count>1</Count></Row>
                    <Row $level={1}><ChevSlot><ChevR /></ChevSlot><IconSlot><ServerObj /></IconSlot>Server Objects</Row>
                  </Tree>
                </DbPanel>
                <EditorPane>
                  <TabStrip>
                    <EdTab><Dolphin />console<Close>✕</Close></EdTab>
                    <Kebab><Kebabs /></Kebab>
                  </TabStrip>
                  <EdToolbar>
                    <Btn $w={35}><Play /></Btn><Sep $m={2} />
                    <Btn $w={38}><ClockI /></Btn><Btn $w={28}><PBadge>p</PBadge></Btn><Btn $w={38}><Wrench /></Btn><Sep $m={0} />
                    <Label $ml={18}>Tx: Auto</Label><Btn $w={26}><ChevD s={13} c="#7b7e80" /></Btn>
                    <Btn $w={40}><CheckI /></Btn><Btn $w={22}><Undo /></Btn><Sep $m={10} />
                    <Btn $w={20}><Stop /></Btn><Sep $m={10} />
                    <Label $ml={8}>Playground</Label><Btn $w={28}><ChevD s={13} c="#7b7e80" /></Btn><Sep $m={7} />
                    <Btn $w={26}><RowsIcon /></Btn>
                    <PushRight>
                      <Schema />
                      <Label $ml={4}>nodejs_test</Label><Btn $w={26}><ChevD s={13} c="#7b7e80" /></Btn>
                      <Gap $w={9} />
                      <Btn $w={30}><Plug s={16} /></Btn>
                      <Label $ml={-2}>console</Label><Btn $w={26}><ChevD s={13} c="#7b7e80" /></Btn>
                      <Gap $w={6} />
                    </PushRight>
                  </EdToolbar>
                  <EditorBody>
                    <Gutter>
                      <GutterLine>1<CheckI s={17} c="#4b8f4f" /></GutterLine>
                    </Gutter>
                    <CodeColumn>
                      <CurrentLine>
                        <Statement><Kw>select</Kw> <Star>*</Star> <Kw>from</Kw> <TableRef>user</TableRef></Statement>
                      </CurrentLine>
                    </CodeColumn>
                    <Bulb><LightBulb /></Bulb>
                    <OkMark><CheckI s={14} c="#3f9c4b" /></OkMark>
                    <StripeMark />
                  </EditorBody>
                  <ProblemsStrip />
                </EditorPane>
                <FilesPane>
                  <FilesHeader>
                    <FilesIcon /> Files
                    <Btn $w={46}><Triangle /></Btn>
                    <PushRight>
                      <Btn $w={32}><OpenFolder /></Btn><Gap $w={3} /><Sep $h={26} $m={1} />
                      <Btn $w={36}><Target /></Btn><Btn $w={33}><ExpandAll /></Btn><Btn $w={33}><CollapseAll /></Btn>
                    </PushRight>
                  </FilesHeader>
                  <Tree $top={0}>
                    <Row $level={0} $base={5} $bg="#0d293e"><ChevSlot><ChevR c="#c0c2c4" /></ChevSlot><IconSlot $mr={4}><Folder c="#7f8f9b" /></IconSlot><span style={{ color: "#c4c6c8" }}>数据库</span><Muted>C:\UserWorkstation\代码\数据库</Muted></Row>
                    <Row $level={0} $base={5}><ChevSlot><ChevR /></ChevSlot><IconSlot $mr={4}><Scratches /></IconSlot>Scratches and Consoles</Row>
                  </Tree>
                </FilesPane>
              </Upper>
              <Services>
                <ServicesTitle>Services</ServicesTitle>
                <ServicesBody>
                  <ServiceLeft>
                    <SideBar>
                      <Btn $h={33}><TxLabel>Tx<TinyDrop /></TxLabel></Btn>
                      <Btn $h={33}><CheckI /></Btn>
                      <Btn $h={33}><Undo /></Btn>
                      <SideSep />
                      <Btn $h={36}><Stop /></Btn>
                      <SideSep />
                      <Btn $h={34}><LayoutI /></Btn>
                    </SideBar>
                    <ServiceMain>
                      <SvcToolbar>
                        <Btn><ExpandAll /></Btn><Btn><CollapseAll /></Btn><Sep />
                        <Btn $w={32}><GroupI /></Btn><Btn $w={32}><NewGroup /></Btn><Sep />
                        <Btn $w={34}><PlusDrop /></Btn>
                      </SvcToolbar>
                      <Tree $top={1}>
                        <Row $level={0} $base={6}><ChevSlot><ChevD /></ChevSlot><IconSlot $mr={5}><Dolphin /></IconSlot>@localhost</Row>
                        <Row $level={1} $base={6}><ChevSlot><ChevD /></ChevSlot><IconSlot $mr={4}><Plug s={16} /></IconSlot>console<Count>112 ms</Count></Row>
                        <Row $level={2} $base={6} $bg="#0d293e">
                          <ChevSlot />
                          <IconSlot $mr={4}><Dolphin /></IconSlot><span style={{ color: "#c4c6c8" }}>console</span><Count>112 ms</Count>
                        </Row>
                      </Tree>
                    </ServiceMain>
                  </ServiceLeft>
                  <ResultPane>
                    <ResTabs>
                      <ResTab><OutputI />Output</ResTab>
                      <ResTab $active><TableGrid c="#9aa0a4" />nodejs_test.user<Close>✕</Close></ResTab>
                    </ResTabs>
                    <ResToolbar>
                      <Btn $w={30}><First /></Btn><Btn $w={32}><Prev /></Btn>
                      <Label $ml={10}>1 row</Label><Btn $w={24}><ChevD s={13} c="#8a8d8f" /></Btn>
                      <Btn $w={30}><Next /></Btn><Btn $w={32}><Last /></Btn><Sep $m={4.5} />
                      <Btn $w={32}><Refresh /></Btn><Btn $w={34}><Stop c={DIM} /></Btn><Sep $m={4} />
                      <Btn $w={33}><Plus /></Btn><Btn $w={32}><Minus /></Btn><Btn $w={33}><Undo /></Btn><Btn $w={33}><EyeUp /></Btn><Btn $w={30}><Up /></Btn><Sep $m={4} />
                      <Label $ml={14}>Tx: Auto</Label><Btn $w={26}><ChevD s={13} c="#8a8d8f" /></Btn><Sep $m={2} />
                      <Label $ml={16}>DDL</Label><Sep $m={14} />
                      <Btn $w={18}><PinI /></Btn>
                      <PushRight>
                        <Label>CSV</Label><Btn $w={26}><ChevD s={13} c="#8a8d8f" /></Btn><Sep $m={4.5} />
                        <Btn $w={32}><Download /></Btn><Btn $w={33}><Upload /></Btn><Btn $w={33}><BlueArrows drop /></Btn><Gap $w={2} />
                      </PushRight>
                    </ResToolbar>
                    <GridArea>
                      <GridWrap>
                        <HeadCell />
                        <HeadCell><KeyCol /><ColName>username</ColName><SortArrows /></HeadCell>
                        <HeadCell><ColIcon /><ColName>password</ColName><SortArrows /></HeadCell>
                        <NumCell>1</NumCell>
                        <Cell>zs</Cell>
                        <Cell>123456</Cell>
                      </GridWrap>
                    </GridArea>
                  </ResultPane>
                </ServicesBody>
              </Services>
              <StatusBar>
                <StatusItem $w={127} $pad={20}>Version Control</StatusItem>
                <StatusItem $w={103} $pad={40}>TODO</StatusItem>
                <StatusItem $w={92} $pad={20}>Problems</StatusItem>
                <StatusItem $w={96} $pad={36} $active>Services</StatusItem>
              </StatusBar>
            </Workspace>
          </Body>
        </Ide>
      </Frame>
      <Taskbar>
        <TaskBtn $w={26} $ml={0} $align="flex-start"><Edge /></TaskBtn>
        <TaskBtn $w={51} $ml={11}><WeChat /></TaskBtn>
        <TaskBtn $w={51} $ml={11}><VsCode /></TaskBtn>
        <TaskBtn $w={51} $ml={11}><TypTile>T</TypTile></TaskBtn>
        <TaskBtn $w={51} $ml={11}><GameTile /></TaskBtn>
        <TaskBtn $w={61} $ml={6} $active><DgLogo size={30} /></TaskBtn>
        <Tray>
          <TraySlot $w={26}><ChevUp /></TraySlot>
          <TraySlot $w={36}><Battery /></TraySlot>
          <TraySlot $w={24}><Wifi /></TraySlot>
          <TraySlot $w={34}><Speaker /></TraySlot>
          <TraySlot $w={26}><ImeChar>英</ImeChar></TraySlot>
          <TraySlot $w={46}><SogouTile>S</SogouTile></TraySlot>
          <Clock><span>20:34</span><span>2022/8/10</span></Clock>
          <TraySlot $w={50}><Notice /></TraySlot>
          <NoticeEdge />
        </Tray>
      </Taskbar>

      <Sogou>
        <SogouCell $w={32}>英</SogouCell>
        <SogouCell $w={31}><Shirt /></SogouCell>
        <SogouCell $w={31} $star><StarI /></SogouCell>
      </Sogou>

      <ArrowLayer viewBox="0 0 1642 980">
        <polygon points="208,208 222,195 226,199 350,168 230,205 225,212" fill="#fb1f17" />
        <polygon points="198,261 216,257 222,262 503,358 223,270 215,274" fill="#fb1f17" />
        <polygon points="953,745 960,727 965,731 1150,596 970,737 973,741" fill="#fb1f17" />
      </ArrowLayer>
      <Annotation $x={367} $y={157}>1 新建数据库 nodejs_test</Annotation>
      <Annotation $x={523} $y={353}>2 新建user 表</Annotation>
      <Annotation $x={1173} $y={556} $fs={33}>3 插入数据</Annotation>
    </Page>
  );
}
